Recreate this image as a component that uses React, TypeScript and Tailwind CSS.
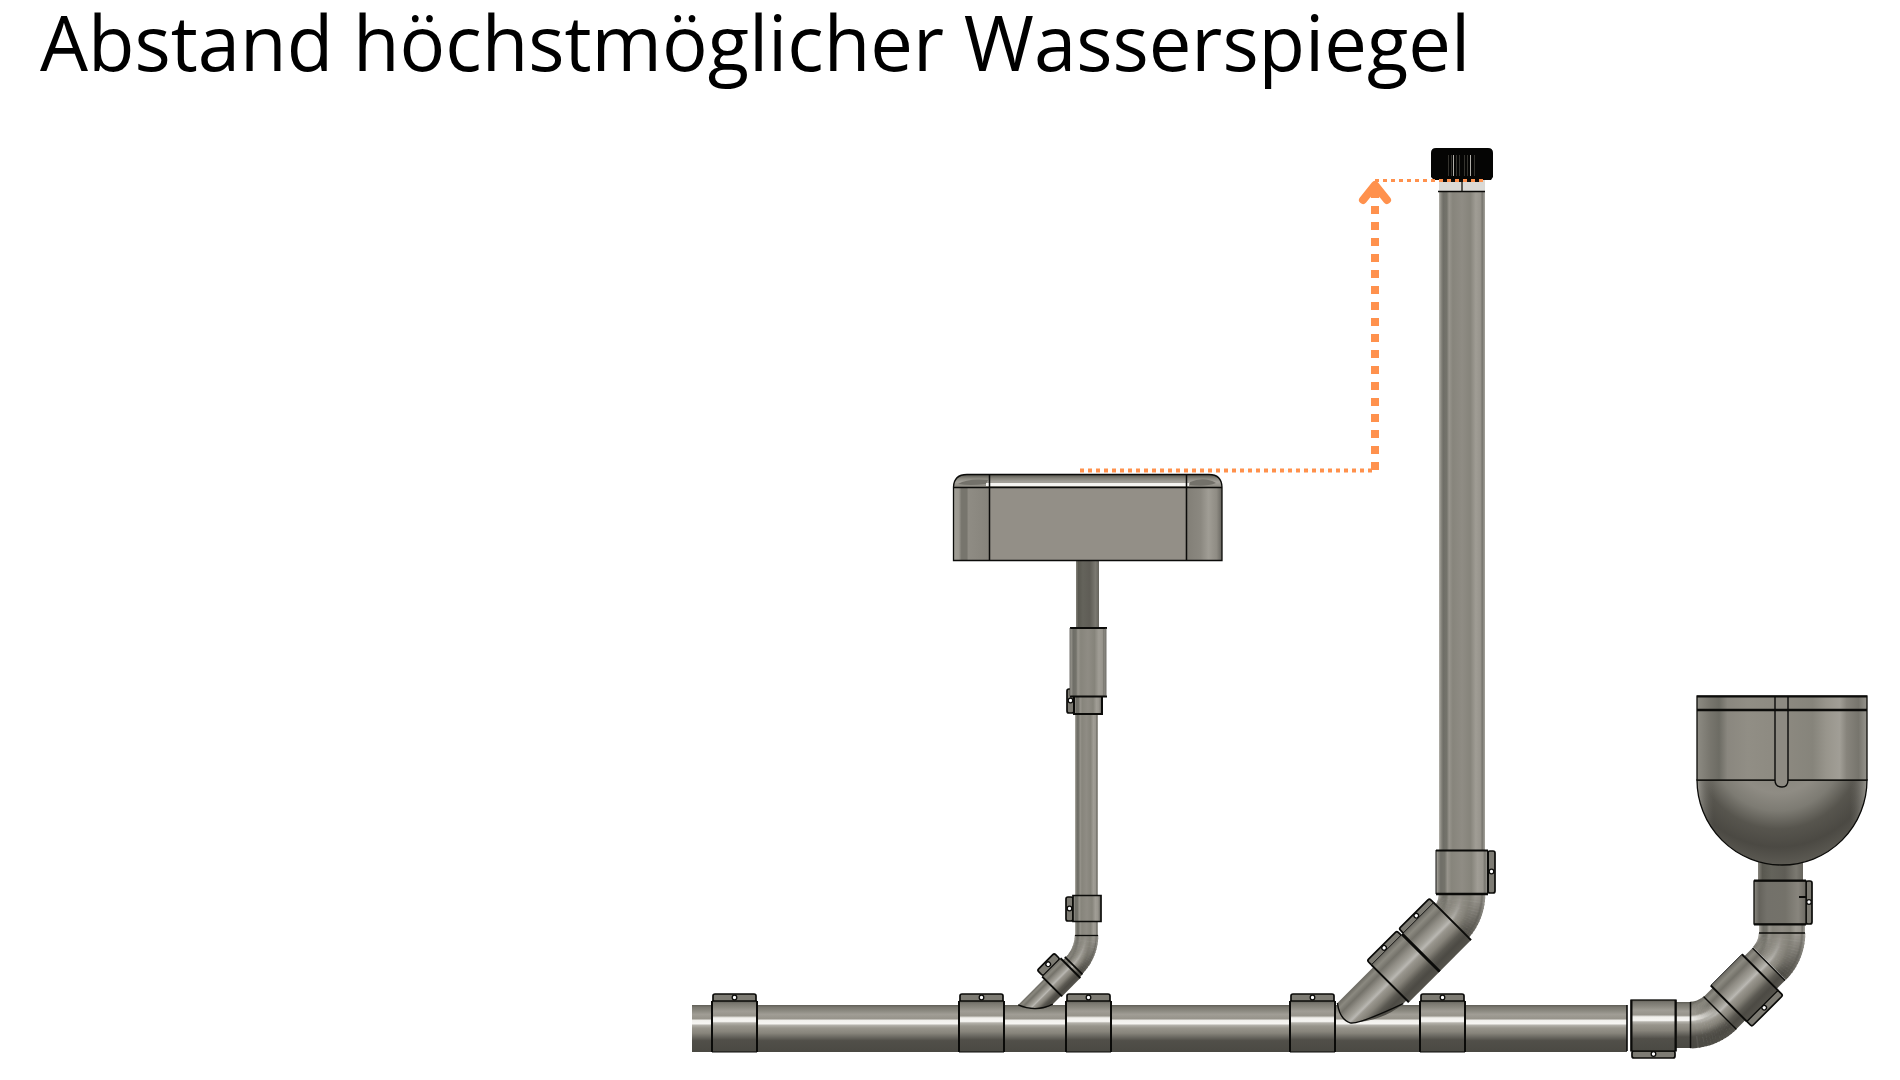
import React from "react";

type Stop = [number, string];

const LINE = "#0b0b09";
const ORANGE = "#ff914d";

const HORIZONTAL: Stop[] = [
  [0, "#5f5e56"], [0.05, "#7a7870"], [0.12, "#8a887f"], [0.2, "#a09d95"], [0.29, "#97948b"],
  [0.33, "#f1f0ec"], [0.4, "#f6f5f2"], [0.43, "#b4b2ab"], [0.49, "#98958c"], [0.6, "#87847b"],
  [0.68, "#6c6a63"], [0.76, "#514f49"], [1, "#4a4943"],
];
const VERTICAL: Stop[] = [
  [0, "#b5b3ac"], [0.04, "#8d8b83"], [0.09, "#6f6e67"], [0.17, "#74736b"], [0.22, "#97948c"],
  [0.3, "#87857c"], [0.5, "#8f8c84"], [0.68, "#86847b"], [0.8, "#a09d95"], [0.9, "#98958d"],
  [0.94, "#77756e"], [1, "#a5a39c"],
];
const DIAGONAL: Stop[] = [
  [0, "#6b6962"], [0.1, "#8b8980"], [0.2, "#74726a"], [0.3, "#8f8c84"], [0.4, "#a3a199"],
  [0.47, "#bab8b3"], [0.52, "#9a978f"], [0.64, "#848178"], [0.76, "#5b5952"], [0.86, "#4c4a44"], [1, "#55534c"],
];
const NECK: Stop[] = [
  [0, "#85837b"], [0.1, "#595850"], [0.3, "#64635b"], [0.6, "#5f5d56"], [0.85, "#7b7971"], [1, "#66645d"],
];
const BASIN: Stop[] = [
  [0, "#a19f97"], [0.02, "#9a978f"], [0.03, "#77756d"], [0.05, "#77756d"], [0.055, "#8f8c84"], [0.13, "#87847c"],
  [0.135, "#938f87"], [0.86, "#938f87"], [0.87, "#827f77"], [0.92, "#8b8880"], [0.95, "#a09d95"], [0.98, "#8f8c84"], [1, "#67655f"],
];
const BOWL_TOP: Stop[] = [
  [0, "#8d8b83"], [0.08, "#77756d"], [0.13, "#6d6c64"], [0.18, "#8a877f"], [0.3, "#918e85"],
  [0.55, "#8b887f"], [0.68, "#86847b"], [0.76, "#98958c"], [0.84, "#a19e96"], [0.88, "#87847c"], [0.95, "#77756d"], [1, "#96948d"],
];

function Gradient({ id, stops, vertical }: { id: string; stops: Stop[]; vertical?: boolean }) {
  return (
    <linearGradient id={id} x1="0" y1="0" x2={vertical ? 0 : 1} y2={vertical ? 1 : 0}>
      {stops.map(([offset, color]) => (
        <stop key={offset} offset={offset} stopColor={color} />
      ))}
    </linearGradient>
  );
}

function channels(hex: string) {
  return [1, 3, 5].map((n) => parseInt(hex.slice(n, n + 2), 16));
}

function blend(a: number[], b: number[], k: number) {
  return a.map((v, i) => v * (1 - k) + b[i] * k);
}

function sample(stops: Stop[], t: number) {
  let i = 1;
  while (i < stops.length - 1 && stops[i][0] < t) i++;
  const [t0, c0] = stops[i - 1];
  const [t1, c1] = stops[i];
  const k = Math.min(1, Math.max(0, (t - t0) / (t1 - t0)));
  return blend(channels(c0), channels(c1), k);
}

type BendProps = {
  cx: number;
  cy: number;
  inner: number;
  outer: number;
  angle: number;
  start: Stop[];
  end: Stop[];
};

/* A 45 degree pipe bend, shaded from one cross-section to another. */
function Bend({ cx, cy, inner, outer, angle, start, end }: BendProps) {
  const steps = 15;
  const arcs: React.ReactNode[] = [];
  for (let s = 0; s < steps; s++) {
    const a0 = ((angle + (45 * s) / steps) * Math.PI) / 180;
    const a1 = ((angle + (45 * (s + 1)) / steps + (s < steps - 1 ? 1 : 0)) * Math.PI) / 180;
    for (let r = inner; r < outer; r += 1) {
      const t = (r + 0.5 - inner) / (outer - inner);
      const rgb = blend(sample(start, t), sample(end, t), (s + 0.5) / steps).map(Math.round);
      const m = r + 0.5;
      arcs.push(
        <path
          key={`${s}-${r}`}
          d={`M${cx + m * Math.cos(a0)} ${cy + m * Math.sin(a0)}A${m} ${m} 0 0 1 ${cx + m * Math.cos(a1)} ${cy + m * Math.sin(a1)}`}
          stroke={`rgb(${rgb.join(",")})`}
          strokeWidth="1.6"
          fill="none"
        />,
      );
    }
  }
  return <g>{arcs}</g>;
}

function Tab({ x, y, w, h }: { x: number; y: number; w: number; h: number }) {
  return (
    <g>
      <rect x={x} y={y} width={w} height={h} rx="2" fill="#7d7b73" stroke={LINE} strokeWidth="1.7" />
      <circle cx={x + w / 2} cy={y + h / 2 - 0.5} r="2.3" fill="#fff" stroke={LINE} strokeWidth="1.3" />
    </g>
  );
}

function PipeClamp({ x }: { x: number }) {
  return (
    <g>
      <Tab x={x + 1} y={994} w={43} h={8} />
      <rect x={x} y={1001} width={45} height={51} fill="url(#horizontal)" />
      <path d={`M${x} 1001V1052M${x + 45} 1001V1052`} stroke={LINE} strokeWidth="2" />
      <path d={`M${x} 1001H${x + 45}`} stroke={LINE} strokeWidth="1.5" />
      <path d={`M${x} 1052H${x + 45}`} stroke={LINE} strokeWidth="1" />
    </g>
  );
}

/* A collar in the frame of a diagonal pipe: x runs along the pipe. */
function DiagonalSleeve({ x, w, top, bottom }: { x: number; w: number; top: number; bottom: number }) {
  return (
    <g>
      <rect x={x} y={top} width={w} height={bottom - top} fill="url(#diagonal)" />
      <path d={`M${x} ${top}V${bottom}M${x + w} ${top}V${bottom}`} stroke={LINE} strokeWidth="2" />
      <path d={`M${x} ${top}H${x + w}`} stroke={LINE} strokeWidth="0.8" />
    </g>
  );
}

function DrainPipe() {
  return (
    <g>
      <rect x="692" y="1005" width="935" height="47" fill="url(#horizontal)" />
      <path d="M1627 1005V1051" stroke={LINE} strokeWidth="1.6" />
      {[712, 959, 1066, 1290, 1420].map((x) => (
        <PipeClamp key={x} x={x} />
      ))}
    </g>
  );
}

function Basin() {
  return (
    <g>
      <rect x="1076" y="560" width="23" height="68" fill="url(#neck)" />
      <rect x="1075" y="713" width="23" height="182" fill="url(#vertical)" />
      <path d="M953.5 560.5V487Q954 474.5 967 474.5H1209Q1221.500 474.500 1222 487V560.500Z" fill="url(#basin)" />
      <path d="M953.500 487Q954 474.500 967 474.500H1209Q1221.500 474.500 1222 487Z" fill="url(#rim)" />
      <path d="M958 484Q968 478 988 480L986 484Q970 486 958 484M1190 482Q1204 476 1216 483Q1206 487 1190 485Z" fill="#73716a" />
      <path d="M986 484.500H1189" stroke="#f5f4f1" strokeWidth="3" />
      <path d="M953.500 560.500V487Q954 474.500 967 474.500H1209Q1221.500 474.500 1222 487V560.500Z" fill="none" stroke={LINE} strokeWidth="1.300" />
      <path d="M953 487.500H1222M989.500 475V560M1186.500 475V560" stroke={LINE} strokeWidth="1.500" />

      <Tab x={1067} y={689} w={7} h={24} />
      <rect x="1074" y="697" width="28" height="17" fill="url(#vertical)" />
      <path d="M1074 697V714H1102V697" fill="none" stroke={LINE} strokeWidth="2" />
      <rect x="1070" y="628" width="36" height="68" fill="url(#vertical)" />
      <path d="M1070 628H1107M1070 696.500H1107" stroke={LINE} strokeWidth="2" />
      <path d="M1070 628V696M1106 628V696" stroke="#4c4a44" strokeWidth="0.800" />

      <rect x="1075" y="920" width="23" height="16" fill="url(#vertical)" />
      <Tab x={1066} y={897} w={7} h={24} />
      <rect x="1073" y="895" width="28" height="26" fill="url(#vertical)" />
      <path d="M1073 895.500H1101V921.500H1073Z" fill="none" stroke={LINE} strokeWidth="1.700" />
      <Bend cx={1043} cy={935} inner={32} outer={55} angle={0} start={VERTICAL} end={DIAGONAL} />
      <path d="M1075 935.500H1098" stroke={LINE} strokeWidth="1.300" />
      <g transform="translate(1074 966) rotate(-45)">
        <path d="M0 -12H-67Q-60 8 -42 12H0Z" fill="url(#diagonal)" />
        <path d="M-67 -12Q-60 6 -42 12" fill="none" stroke={LINE} strokeWidth="1.300" />
        <Tab x={-29} y={-23} w={24} h={8} />
        <DiagonalSleeve x={-30} w={26} top={-15} bottom={13} />
        <path d="M0 -13V12" stroke={LINE} strokeWidth="1.800" />
      </g>
    </g>
  );
}

function VentPipe() {
  const ribs = [1448, 1451, 1453, 1456, 1459, 1464, 1467, 1470, 1474];
  return (
    <g>
      <Bend cx={1419} cy={894} inner={20} outer={66} angle={0} start={VERTICAL} end={DIAGONAL} />
      <rect x="1439" y="191" width="46" height="660" fill="url(#vertical)" />
      <rect x="1439" y="179" width="46" height="12" fill="#dbdad6" />
      <path d="M1462 180V191" stroke="#5a5953" strokeWidth="2" />
      <path d="M1438 191.500H1485" stroke={LINE} strokeWidth="1.500" />
      <path d="M1431 177V153Q1431 148 1436 148H1488Q1493 148 1493 153V177L1491 180H1434Z" fill="#050504" />
      <path d="M1440 181H1483" stroke={LINE} strokeWidth="2" />
      {ribs.map((x, i) => (
        <path key={x} d={`M${x}.500 155V176`} stroke={i === 2 || i === 7 ? "#b3b1ab" : "#35342f"} />
      ))}
      <Tab x={1488} y={851} w={7} h={42} />
      <rect x="1436" y="850" width="52" height="44" fill="url(#vertical)" />
      <path d="M1436 850.500H1488M1488 851V893" stroke={LINE} strokeWidth="2" />
      <path d="M1436 850V894" stroke={LINE} strokeWidth="1" />
      <path d="M1436 894H1488" stroke={LINE} strokeWidth="2.400" />
      <g transform="translate(1452 921) rotate(-45)">
        <path d="M-80 -23H-139Q-149 -12 -144 0Q-120 22 -93 24H-80Z" fill="url(#diagonal)" />
        <path d="M-139 -23Q-149 -10 -144 0Q-140 7 -93 24" fill="none" stroke={LINE} strokeWidth="1.400" />
        <Tab x={-88} y={-32} w={42} h={7} />
        <Tab x={-43} y={-32} w={43} h={7} />
        <DiagonalSleeve x={-88} w={43} top={-26} bottom={27} />
        <DiagonalSleeve x={-44} w={44} top={-26} bottom={27} />
      </g>
    </g>
  );
}

function Urinal() {
  return (
    <g>
      <rect x="1758" y="862" width="45" height="20" fill="url(#neck)" />
      <path d="M1697 780H1867A85 85 0 0 1 1697 780Z" fill="url(#bowl)" />
      <path d="M1697 780H1867A85 85 0 0 1 1697 780Z" fill="url(#bowlEdge)" stroke={LINE} strokeWidth="1.300" />
      <rect x="1697" y="696" width="170" height="84" fill="url(#bowlTop)" stroke={LINE} strokeWidth="1.300" />
      <path d="M1775 696V780Q1775 787 1782 787Q1788 787 1788 780V696" fill="#8d8a82" stroke={LINE} strokeWidth="1.400" />
      <path d="M1697 710H1867" stroke={LINE} strokeWidth="2.400" />
      <path d="M1697 696.500H1867" stroke={LINE} strokeWidth="2" />

      <rect x="1759" y="924" width="46" height="10" fill="url(#vertical)" />
      <Tab x={1806} y={881} w={6} h={43} />
      <rect x="1754" y="881" width="52" height="43" fill="url(#collar)" stroke={LINE} strokeWidth="1.300" />
      <path d="M1754 880.500H1806M1754 924.500H1806M1799 897H1806" stroke={LINE} strokeWidth="1.900" />
      <Bend cx={1739} cy={933} inner={20} outer={66} angle={0} start={VERTICAL} end={DIAGONAL} />
      <path d="M1759 933H1805" stroke={LINE} strokeWidth="1.600" />

      <rect x="1675" y="1002" width="16" height="46" fill="url(#horizontal)" />
      <Bend cx={1690} cy={982} inner={20} outer={66} angle={45} start={DIAGONAL} end={HORIZONTAL} />
      <path d="M1690.500 1002V1048" stroke={LINE} strokeWidth="1.500" />
      <g transform="translate(1720 1013) rotate(-45)">
        <rect x="0" y="-23" width="69" height="46" fill="url(#diagonal)" />
        <path d="M0 -23V23M69 -23V23" stroke={LINE} strokeWidth="1.400" />
        <Tab x={13} y={24} w={44} h={8} />
        <DiagonalSleeve x={13} w={44} top={-26} bottom={25} />
        <path d="M13 25H57" stroke={LINE} strokeWidth="1.400" />
      </g>
      <Tab x={1632} y={1051} w={43} h={7} />
      <rect x="1631" y="1000" width="45" height="51" fill="url(#horizontal)" stroke={LINE} strokeWidth="1.300" />
      <path d="M1631.500 1000V1051M1675.500 1000V1051" stroke={LINE} strokeWidth="2" />
    </g>
  );
}

function HeightMarker() {
  return (
    <g stroke={ORANGE} fill="none">
      <path d="M1080 470.500H1373" strokeWidth="4" strokeDasharray="4 4" />
      <path d="M1375 180.500H1484" strokeWidth="3" strokeDasharray="4 4" />
      <path d="M1375 206V470" strokeWidth="8" strokeDasharray="8 8" />
      <path d="M1363 200L1375 185L1387 200" strokeWidth="8" strokeLinecap="round" strokeLinejoin="round" />
      <path d="M1375 182L1382 190L1379 198H1371L1368 190Z" fill={ORANGE} stroke="none" />
    </g>
  );
}

export default function App() {
  return (
    <main className="min-h-screen bg-white text-black">
      <h1 className="h-28 whitespace-nowrap pl-10 font-['Open_Sans','Noto_Sans',sans-serif] text-[76px] leading-[84px]">
        Abstand höchstmöglicher Wasserspiegel
      </h1>
      <svg viewBox="0 112 1900 968" className="block w-full" role="img" aria-label="Rohrleitung mit Waschbecken, Lüftungsrohr und Urinal">
        <defs>
          <Gradient id="horizontal" stops={HORIZONTAL} vertical />
          <Gradient id="vertical" stops={VERTICAL} />
          <Gradient id="diagonal" stops={DIAGONAL} vertical />
          <Gradient id="neck" stops={NECK} />
          <Gradient id="basin" stops={BASIN} />
          <Gradient id="bowlTop" stops={BOWL_TOP} />
          <Gradient id="rim" vertical stops={[[0, "#55534c"], [0.3, "#86847b"], [0.6, "#a5a29b"], [1, "#8b8880"]]} />
          <Gradient id="collar" stops={[[0, "#8a8880"], [0.1, "#65635c"], [0.25, "#73716a"], [0.6, "#74726a"], [0.85, "#88857d"], [1, "#6c6a63"]]} />
          <Gradient id="bowlEdge" stops={[[0, "#a5a39cdd"], [0.1, "#6b696200"], [0.9, "#6b696200"], [1, "#a5a39cdd"]]} />
          <radialGradient id="bowl" gradientUnits="userSpaceOnUse" cx="1778" cy="745" r="120">
            <stop offset="0.200" stopColor="#87857c" />
            <stop offset="0.400" stopColor="#8f8c84" />
            <stop offset="0.550" stopColor="#7d7b73" />
            <stop offset="0.700" stopColor="#57554e" />
            <stop offset="0.850" stopColor="#4b4943" />
            <stop offset="1" stopColor="#5c5a53" />
          </radialGradient>
        </defs>
        <DrainPipe />
        <Basin />
        <VentPipe />
        <Urinal />
        <HeightMarker />
      </svg>
    </main>
  );
}
